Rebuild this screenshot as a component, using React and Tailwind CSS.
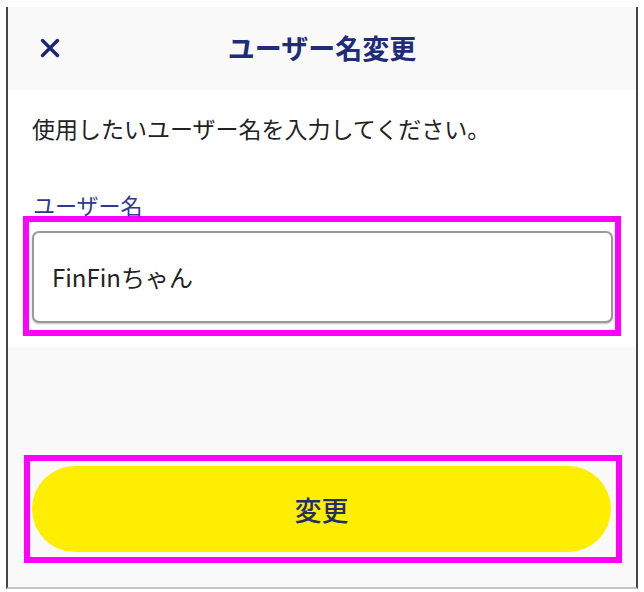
const font = { fontFamily: '"Noto Sans CJK JP", "Noto Sans", sans-serif' };

const CloseIcon = () => (
  <svg width="20" height="20" viewBox="0 0 20 20" className="text-[#1c2770]">
    <path d="M2.5 2.5L17.5 17.5M17.5 2.5L2.5 17.5" stroke="currentColor" strokeWidth="3.4" strokeLinecap="round" />
  </svg>
);

export default function App() {
  return (
    <div className="bg-white min-h-[592px] pl-[6px] pt-[7px]" style={font}>
      <div className="w-[632px] border-x-2 border-x-[#464646] border-b-2 border-b-[#c4c4c4]">
        {/* Header */}
        <div className="relative h-[83px] bg-[#f9f9f9] flex items-center justify-center">
          <button className="absolute left-[32px] top-[31px] flex items-center justify-center">
            <CloseIcon />
          </button>
          <h1 className="text-[27px] font-bold text-[#212c78] leading-none pb-[2px]">ユーザー名変更</h1>
        </div>

        {/* Form */}
        <div className="bg-white pt-[22px] pb-[11px]">
          <p className="px-[24px] text-[23px] leading-[32px] text-[#222]">使用したいユーザー名を入力してください。</p>
          <label className="block mt-[48px] px-[25px] text-[22px] leading-[24px] text-[#2e3a8c]">ユーザー名</label>
          <div className="mt-0 mx-[15px] h-[120px] border-[6px] border-[#ff00ff] pt-[9px] pl-[3px] pr-[2px]">
            <div className="h-[92px] rounded-[7px] border-2 border-[#9a9a9a] bg-white shadow-[0_1px_2px_rgba(0,0,0,0.25)] flex items-center pl-[18px]">
              <span className="text-[24px] text-[#222] leading-none">FinFinちゃん</span>
            </div>
          </div>
        </div>

        {/* Footer */}
        <div className="bg-[#f9f9f9] h-[240px] pt-[108px]">
          <div className="ml-[16px] mr-[14px] h-[108px] border-[6px] border-[#ff00ff] pt-[5px] pl-[2px] pr-[5px]">
            <button className="w-full h-[86px] rounded-full bg-[#ffee00] flex items-center justify-center">
              <span className="text-[27px] font-medium text-[#232d6e] leading-none">変更</span>
            </button>
          </div>
        </div>
      </div>
    </div>
  );
}
